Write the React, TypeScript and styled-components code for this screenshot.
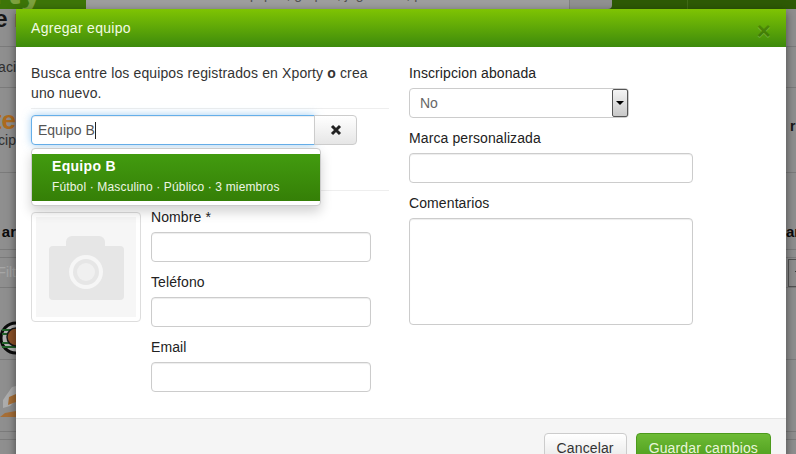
import styled, { createGlobalStyle } from 'styled-components';

const GlobalStyle = createGlobalStyle`
  html, body {
    margin: 0;
    height: 454px;
    overflow: hidden;
    background: #fff;
    font-family: "Liberation Sans", Arial, sans-serif;
    font-size: 14px;
    color: #333;
  }
  * { box-sizing: border-box; }
`;

const Page = styled.div`
  position: relative;
  width: 796px;
  height: 454px;
  overflow: hidden;
  background: #cdcdcd;
`;

const TopBar = styled.div`
  display: flex;
  height: 9px;
  overflow: hidden;
  background: #438108;
`;

const Logo = styled.div`
  width: 86px;
  height: 9px;
  overflow: hidden;
  color: #b4e85a;
  font-size: 40px;
  font-weight: bold;
  line-height: 9px;
  white-space: nowrap;
  background: #58a80c;
  span {
    display: block;
    margin-top: -14px;
    margin-left: -84px;
  }
`;

const SearchBox = styled.div`
  width: 483px;
  overflow: hidden;
  background: #e2e2e2;
  color: #777;
  font-size: 14px;
  line-height: 9px;
  padding-left: 104px;
  white-space: nowrap;
  span {
    display: block;
    margin-top: -10px;
  }
`;

const SearchButton = styled.div`
  width: 43px;
  border-left: 1px solid #bbb;
  border-radius: 0 0 4px 0;
  background: #d0d0d0;
`;

const TopBarNav = styled.div`
  flex: 1;
  background: #438108;
  padding-left: 75px;
  div {
    width: 1px;
    height: 9px;
    background: #5d9a22;
  }
`;

const PageRow = styled.div<{ $h: number }>`
  display: flex;
  justify-content: space-between;
  height: ${p => p.$h}px;
  border-bottom: 1px solid #b0b0b0;
`;

const Edge = styled.div<{ $side: 'left' | 'right' }>`
  display: flex;
  flex-direction: column;
  align-items: ${p => (p.$side === 'left' ? 'flex-end' : 'flex-start')};
  width: ${p => (p.$side === 'left' ? 16 : 10)}px;
  overflow: hidden;
  white-space: nowrap;
`;

const EdgeText = styled.div<{ $top?: number; $size?: number; $color?: string; $bold?: boolean; $bleed?: number }>`
  margin-top: ${p => p.$top ?? 0}px;
  margin-right: ${p => -(p.$bleed ?? 0)}px;
  font-size: ${p => p.$size ?? 14}px;
  line-height: 20px;
  font-weight: ${p => (p.$bold ? 'bold' : 'normal')};
  color: ${p => p.$color ?? '#444'};
`;

const FilterBox = styled.div`
  display: flex;
  align-items: center;
  justify-content: flex-end;
  width: 16px;
  height: 28px;
  color: #eee;
  font-size: 14px;
  overflow: hidden;
`;

const FilterSelect = styled.div`
  width: 10px;
  height: 28px;
  margin-top: 1px;
  margin-left: 2px;
  padding: 11px 0 0 6px;
  border: 1px solid #777;
  background: #ccc;
  &::after {
    content: '';
    display: block;
    width: 0;
    height: 0;
    border-left: 3px solid transparent;
    border-right: 3px solid transparent;
    border-top: 4px solid #000;
  }
`;

const EdgeArt = styled.svg<{ $top: number }>`
  display: block;
  margin-top: ${p => p.$top}px;
  flex: none;
`;

const Backdrop = styled.div`
  position: absolute;
  inset: 0;
  background: rgba(0, 0, 0, 0.3);
`;

const Modal = styled.div`
  position: absolute;
  top: 9px;
  left: 16px;
  width: 770px;
  background: #fff;
  box-shadow: 0 3px 9px rgba(0, 0, 0, 0.5);
`;

const ModalHeader = styled.div`
  display: flex;
  align-items: center;
  justify-content: space-between;
  height: 38px;
  padding: 0 15px;
  background: linear-gradient(to bottom, #7fc403, #3d8a0c);
  color: #f2fbe4;
  font-size: 14px;
  letter-spacing: 0.3px;
`;

const CloseMark = styled.span`
  margin-top: 5px;
  margin-right: 0;
  font-size: 24px;
  font-weight: bold;
  line-height: 1;
  color: #000;
  opacity: 0.2;
  text-shadow: 0 1px 0 #fff;
`;

const ModalBody = styled.div`
  display: grid;
  grid-template-columns: 358px 284px;
  column-gap: 20px;
  height: 371px;
  padding: 16px 15px 0;
`;

const Intro = styled.p`
  max-width: 345px;
  margin: 0;
  line-height: 20px;
  letter-spacing: 0.13px;
  b { font-weight: bold; }
`;

const Rule = styled.hr<{ $top: number }>`
  margin: ${p => p.$top}px 0 0;
  border: 0;
  border-top: 1px solid #eee;
`;

const SearchGroup = styled.div`
  position: relative;
  display: flex;
  width: 326px;
  margin-top: 6px;
`;

const SearchInput = styled.input`
  width: 284px;
  height: 30px;
  padding: 4px 6px;
  border: 1px solid #66afe9;
  border-radius: 4px 0 0 4px;
  outline: 0;
  font: 14px "Liberation Sans", Arial, sans-serif;
  color: #555;
  box-shadow: inset 0 1px 1px rgba(0, 0, 0, 0.075), 0 0 8px rgba(102, 175, 233, 0.6);
`;

const TextCaret = styled.span`
  position: absolute;
  top: 7px;
  left: 64px;
  width: 1px;
  height: 17px;
  background: #222;
`;

const ClearButton = styled.button`
  display: flex;
  align-items: center;
  justify-content: center;
  width: 43px;
  height: 30px;
  margin-left: -1px;
  padding: 0;
  border: 1px solid #ccc;
  border-radius: 0 4px 4px 0;
  background: linear-gradient(to bottom, #fff, #e6e6e6);
`;

const Suggestions = styled.div`
  position: absolute;
  top: 33px;
  left: 0;
  width: 290px;
  height: 58px;
  padding: 5px 0;
  background: #fff;
  border: 1px solid #ccc;
  border-radius: 4px;
  box-shadow: 0 6px 12px rgba(0, 0, 0, 0.175);
`;

const Suggestion = styled.div`
  height: 47px;
  padding: 2px 20px;
  background: linear-gradient(to bottom, #429b0f, #357f07);
  color: #fff;
`;

const SuggestionName = styled.div`
  font-size: 14px;
  font-weight: bold;
  line-height: 20px;
  letter-spacing: 0.3px;
`;

const SuggestionMeta = styled.div`
  margin-top: 2px;
  font-size: 12px;
  line-height: 18px;
  letter-spacing: 0.15px;
  color: #eef6e4;
`;

const TeamRow = styled.div`
  display: flex;
  gap: 10px;
  margin-top: 16px;
`;

const Photo = styled.div`
  flex: none;
  width: 110px;
  height: 110px;
  margin-top: 5px;
  padding: 4px;
  border: 1px solid #ddd;
  border-radius: 4px;
  background: #fff;
  svg { display: block; }
`;

const Fields = styled.div`
  width: 220px;
`;

const Field = styled.div`
  margin-bottom: 10px;
`;

const Label = styled.label`
  display: block;
  margin-bottom: 5px;
  line-height: 20px;
  letter-spacing: 0.1px;
  color: #222;
`;

const TextInput = styled.input`
  display: block;
  width: 100%;
  height: 30px;
  padding: 4px 6px;
  border: 1px solid #ccc;
  border-radius: 4px;
  outline: 0;
  box-shadow: inset 0 1px 1px rgba(0, 0, 0, 0.075);
`;

const SelectWrap = styled.div`
  position: relative;
  width: 220px;
`;

const Select = styled.select`
  display: block;
  width: 100%;
  height: 30px;
  padding: 4px 10px;
  appearance: none;
  border: 1px solid #ccc;
  border-radius: 4px;
  outline: 0;
  background: #fff;
  font: 14px "Liberation Sans", Arial, sans-serif;
  color: #666;
`;

const SelectArrow = styled.span`
  position: absolute;
  top: 1px;
  right: 1px;
  display: flex;
  align-items: center;
  justify-content: center;
  width: 16px;
  height: 28px;
  border: 1px solid #555;
  border-radius: 2px;
  background: linear-gradient(to bottom, #f4f4f4, #c8c8c8);
  &::after {
    content: '';
    border-left: 4px solid transparent;
    border-right: 4px solid transparent;
    border-top: 4px solid #000;
  }
`;

const Comments = styled.textarea`
  display: block;
  width: 100%;
  height: 107px;
  border: 1px solid #ccc;
  border-radius: 4px;
  outline: 0;
  resize: none;
  box-shadow: inset 0 1px 1px rgba(0, 0, 0, 0.075);
`;

const ModalFooter = styled.div`
  display: flex;
  justify-content: flex-end;
  gap: 9px;
  height: 60px;
  padding: 14px 15px 0;
  border-top: 1px solid #e5e5e5;
  background: #f5f5f5;
`;

const FooterButton = styled.button<{ $primary?: boolean }>`
  height: 30px;
  padding: 0 12px;
  border: 1px solid ${p => (p.$primary ? '#4c9a1c' : '#ccc')};
  border-radius: 4px;
  font: 14px "Liberation Sans", Arial, sans-serif;
  letter-spacing: 0.13px;
  color: ${p => (p.$primary ? '#eaf6da' : '#333')};
  background: ${p =>
    p.$primary ? 'linear-gradient(to bottom, #6dbb35, #4b9a1b)' : 'linear-gradient(to bottom, #fff, #e6e6e6)'};
`;

function CameraPlaceholder() {
  return (
    <svg width="100" height="100" viewBox="0 0 100 100">
      <rect width="100" height="100" fill="#f6f6f6" />
      <path
        d="M13 33a4 4 0 0 1 4-4h13v-4a6 6 0 0 1 6-6h27a6 6 0 0 1 6 6v4h15a4 4 0 0 1 4 4v46a4 4 0 0 1-4 4H17a4 4 0 0 1-4-4z"
        fill="#e6e6e6"
      />
      <circle cx="50" cy="55" r="17" fill="#f6f6f6" />
      <circle cx="50" cy="55" r="13" fill="#e6e6e6" />
      <circle cx="50" cy="55" r="9" fill="#f0f0f0" />
    </svg>
  );
}

function CrestBadge() {
  return (
    <EdgeArt $top={32} width="16" height="36" viewBox="0 0 16 36">
      <circle cx="16" cy="18" r="15" fill="#fff" stroke="#111" strokeWidth="3" />
      <path d="M2 10h14M2 14h14M2 23h14M2 27h14" stroke="#2f8a3a" strokeWidth="2" />
      <circle cx="16" cy="17" r="9" fill="#c9743a" stroke="#222" strokeWidth="1.5" />
    </EdgeArt>
  );
}

function ConeArt() {
  return (
    <EdgeArt $top={24} width="16" height="34" viewBox="0 0 16 34">
      <path d="M3 16l9-13 4-1v14l-6 6-7 2z" fill="#f8f8f8" />
      <path d="M9 13l7-3v8l-8 3z" fill="#f0a050" />
      <path d="M0 33l5-4 11-2v6z" fill="#f0a050" />
    </EdgeArt>
  );
}

export default function App() {
  return (
    <Page>
      <GlobalStyle />
      <TopBar>
        <Logo><span>Xporty</span></Logo>
        <SearchBox><span>Buscar equipos, grupos, jugadores, pistas</span></SearchBox>
        <SearchButton />
        <TopBarNav><div /></TopBarNav>
      </TopBar>
      <PageRow $h={38}>
        <Edge $side="left"><EdgeText $top={0} $size={24} $bold $bleed={13} $color="#222">e n</EdgeText></Edge>
        <Edge $side="right" />
      </PageRow>
      <PageRow $h={41}>
        <Edge $side="left"><EdgeText $top={10}>aci</EdgeText></Edge>
        <Edge $side="right" />
      </PageRow>
      <PageRow $h={85}>
        <Edge $side="left">
          <EdgeText $top={22} $size={26} $bold $color="#f89a2c">te</EdgeText>
          <EdgeText>icip</EdgeText>
        </Edge>
        <Edge $side="right"><EdgeText $top={28} $bold $color="#222">&nbsp;r</EdgeText></Edge>
      </PageRow>
      <PageRow $h={77}>
        <Edge $side="left"><EdgeText $top={49} $size={15} $bold $color="#111">ar</EdgeText></Edge>
        <Edge $side="right"><EdgeText $top={49} $size={15} $bold $color="#111">ar</EdgeText></Edge>
      </PageRow>
      <PageRow $h={8} />
      <PageRow $h={30}>
        <Edge $side="left"><FilterBox>Filt</FilterBox></Edge>
        <Edge $side="right"><FilterSelect /></Edge>
      </PageRow>
      <PageRow $h={72}>
        <Edge $side="left"><CrestBadge /></Edge>
        <Edge $side="right" />
      </PageRow>
      <PageRow $h={72}>
        <Edge $side="left"><ConeArt /></Edge>
        <Edge $side="right" />
      </PageRow>
      <PageRow $h={8} />
      <Backdrop />
      <Modal>
        <ModalHeader>
          Agregar equipo
          <CloseMark>×</CloseMark>
        </ModalHeader>
        <ModalBody>
          <div>
            <Intro>Busca entre los equipos registrados en Xporty <b>o</b> crea uno nuevo.</Intro>
            <Rule $top={5} />
            <SearchGroup>
              <SearchInput defaultValue="Equipo B" />
              <TextCaret />
              <ClearButton aria-label="Limpiar">
                <svg width="12" height="12" viewBox="0 0 12 12">
                  <path d="M2 2l8 8M10 2l-8 8" stroke="#222" strokeWidth="3" />
                </svg>
              </ClearButton>
              <Suggestions>
                <Suggestion>
                  <SuggestionName>Equipo B</SuggestionName>
                  <SuggestionMeta>Fútbol · Masculino · Público · 3 miembros</SuggestionMeta>
                </Suggestion>
              </Suggestions>
            </SearchGroup>
            <Rule $top={45} />
            <TeamRow>
              <Photo><CameraPlaceholder /></Photo>
              <Fields>
                <Field>
                  <Label>Nombre *</Label>
                  <TextInput />
                </Field>
                <Field>
                  <Label>Teléfono</Label>
                  <TextInput />
                </Field>
                <Field>
                  <Label>Email</Label>
                  <TextInput />
                </Field>
              </Fields>
            </TeamRow>
          </div>
          <div>
            <Field>
              <Label>Inscripcion abonada</Label>
              <SelectWrap>
                <Select defaultValue="No">
                  <option>No</option>
                  <option>Sí</option>
                </Select>
                <SelectArrow />
              </SelectWrap>
            </Field>
            <Field>
              <Label>Marca personalizada</Label>
              <TextInput />
            </Field>
            <Field>
              <Label>Comentarios</Label>
              <Comments />
            </Field>
          </div>
        </ModalBody>
        <ModalFooter>
          <FooterButton>Cancelar</FooterButton>
          <FooterButton $primary>Guardar cambios</FooterButton>
        </ModalFooter>
      </Modal>
    </Page>
  );
}
